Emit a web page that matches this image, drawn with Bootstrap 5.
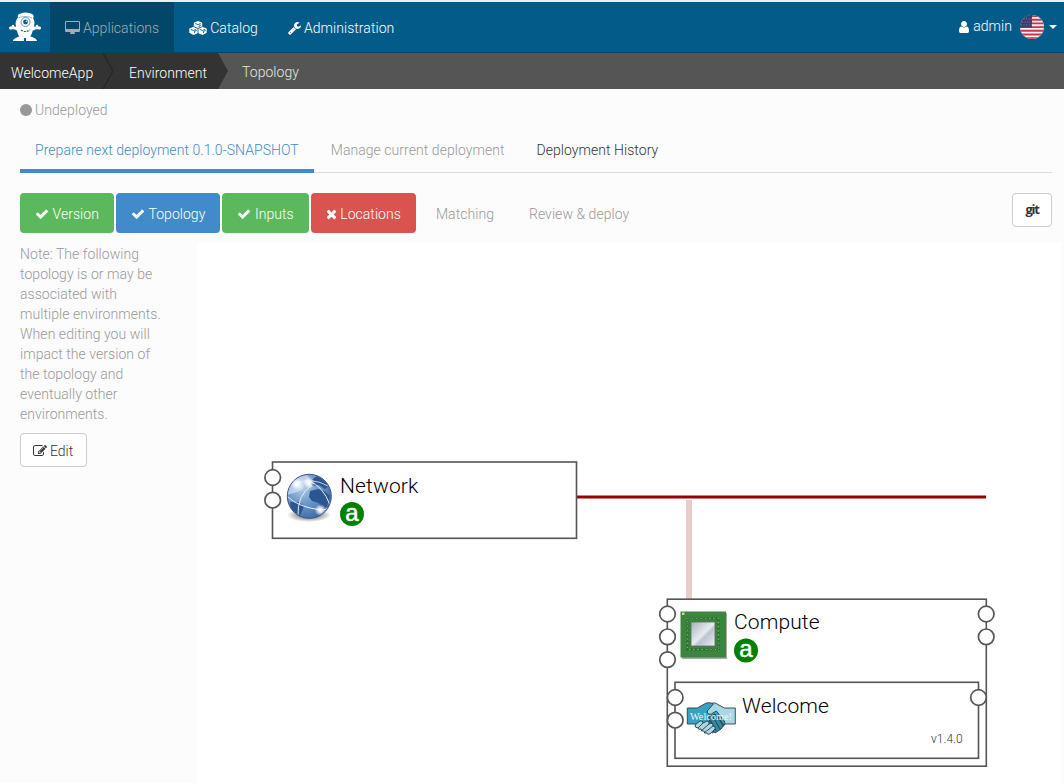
<!DOCTYPE html>
<html lang="en">
<head>
<meta charset="utf-8">
<meta name="viewport" content="width=device-width, initial-scale=1">
<title>WelcomeApp - Topology</title>
<link href="https://cdn.jsdelivr.net/npm/bootstrap@5.3.0/dist/css/bootstrap.min.css" rel="stylesheet">
<style>
body{font-family:Roboto,"Liberation Sans",sans-serif;font-weight:300;font-size:14px;line-height:20px;letter-spacing:.05px;color:#333;background:#fcfcfc;height:783px;overflow:hidden;border-top:2px solid #e9f0f4}
a{text-decoration:none}
.ico{fill:currentColor;height:14px;flex:none;display:block}
.topbar{background:#035b8a;height:51px;border-bottom:1px solid #02466b;--bs-navbar-padding-y:0}
.brand-box{width:50px}
.topbar .navbar-nav .nav-link{color:#fff;padding:2px 15px 0;gap:3px;height:50px;font-weight:300}
.topbar .navbar-nav .nav-link.active{background:#02466a;color:#a5abb0}
.user-menu{color:#fff;padding-right:7px}
.user-menu span{padding-bottom:2px}
.crumbs{background:#555;height:36px}
.crumbs svg{display:block;flex:none}
.crumb{background:#333;color:#fff;padding-top:4px}
.crumb-1{width:103px;padding-left:11px}
.crumb-2{width:105px;padding-left:16px}
.crumb-3{color:#e6e6e6;padding:2px 0 0 14px}
.state{color:#999;padding:11px 0 0 20px;gap:3px}
.dot{width:12px;height:12px;border-radius:50%;background:#999}
.tabs{margin:10px 12px 0 20px;height:43px;border-bottom:1px solid #ddd}
.tabs .nav-link{padding:10px 15px 0;height:43px;color:#999;border-bottom:4px solid transparent;margin-right:2px}
.tabs .nav-link.active{color:#428bca;border-color:#428bca}
.tabs .nav-link.dark{color:#333}
.steps{margin:20px 12px 0 20px;gap:2px;height:50px}
.step{height:40px;border-radius:4px;padding:2px 15px 0;gap:3.500px;color:#999}
.ok{background:#5cb85c;color:#fff}.cur{background:#428bca;color:#fff}.bad{background:#d9534f;color:#fff}
.plain-btn{background:#fff;border:1px solid #ccc;border-radius:4px;height:34px;font-size:14px;font-weight:300;color:#333;padding:2px 12px 0;line-height:20px}
.edit-btn{margin-top:9px;width:67px}
.git-btn{width:40px;padding:0 0 2px;font:700 13px "Open Sans","Noto Sans",sans-serif;letter-spacing:-1.300px}
.side{width:197px;padding:1px 30px 0 20px;color:#999}
.canvas{width:865px;height:540px;background:#fff}
.canvas svg{display:block}
.box{fill:#fff;stroke:#555;stroke-width:1.6}
.port{fill:#fff;stroke:#555;stroke-width:1.7}
.title{font-size:21px;fill:#000;letter-spacing:.13px}
.tag{font:400 24px "Liberation Sans",sans-serif;fill:#fff;stroke:#fff;stroke-width:.5;text-anchor:middle}
</style>
</head>
<body>
<svg class="d-none">
<symbol id="check" viewBox="0 0 1792 1792"><path d="M1671 566q0 40-28 68l-724 724-136 136q-28 28-68 28t-68-28l-136-136-362-362q-28-28-28-68t28-68l136-136q28-28 68-28t68 28l294 295 656-657q28-28 68-28t68 28l136 136q28 28 28 68z"/></symbol>
<symbol id="times" viewBox="192 0 1408 1792"><path d="M1490 1322q0 40-28 68l-136 136q-28 28-68 28t-68-28l-294-294-294 294q-28 28-68 28t-68-28l-136-136q-28-28-28-68t28-68l294-294-294-294q-28-28-28-68t28-68l136-136q28-28 68-28t68 28l294 294 294-294q28-28 68-28t68 28l136 136q28 28 28 68t-28 68l-294 294 294 294q28 28 28 68z"/></symbol>
</svg>

<nav class="topbar navbar navbar-expand flex-nowrap">
  <a class="brand-box d-flex justify-content-center" href="#">
    <svg width="34" height="30" viewBox="0 0 34 30"><g fill="#fff"><path d="M10 5.500C9 3 11 1.500 13 1.500c3-2 9-1 11 .5 2 1 2 3 1 4 2 3 2 7 0 11-.5 4-2 7-4 9h-8c-3-2-4-6-4-9-2-4-2-8 1-11.500z"/><path d="M9 17C7 15 5 15.500 2.500 16M25 17c2-2 4-1.500 6.500-1" stroke="#fff" stroke-width="3" fill="none" stroke-linecap="round"/><circle cx="5" cy="14" r="1.200"/><circle cx="29" cy="14" r="1.200"/><path d="M11 24.500h5V29H5c0-2 3-3 6-4.500zM18 24.500h5c3 1.500 6 2.500 6 4.500H18z"/></g><path d="M10.500 6c4-2 9-2 13.500 0" fill="none" stroke="#789fb5" stroke-width=".8"/><circle cx="17.500" cy="10" r="4.500" fill="#fff" stroke="#5f93b0"/><circle cx="17.500" cy="10" r="2.400" fill="#035b8a"/><circle cx="18.300" cy="9.200" r=".7" fill="#fff"/><path d="M13 18q4.500 3 9 0" fill="none" stroke="#035b8a" stroke-width="1.200" stroke-dasharray="2 1"/></svg>
  </a>
  <div class="navbar-nav">
    <a class="nav-link active d-flex align-items-center" href="#"><svg class="ico" width="15" viewBox="-64 0 1920 1792"><path d="M1728 992v-832q0-13-9.500-22.500t-22.500-9.500h-1600q-13 0-22.500 9.500t-9.500 22.500v832q0 13 9.500 22.500t22.500 9.500h1600q13 0 22.500-9.500t9.500-22.500zm128-832v1088q0 66-47 113t-113 47h-544q0 37 16 77.500t32 71 16 43.500q0 26-19 45t-45 19h-512q-26 0-45-19t-19-45q0-14 16-44t32-70 16-78h-544q-66 0-113-47t-47-113v-1088q0-66 47-113t113-47h1600q66 0 113 47t47 113z"/></svg>Applications</a>
    <a class="nav-link d-flex align-items-center" href="#"><svg class="ico" width="18" viewBox="0 0 18 14"><path d="M9 0l4.200 1.700v4L17.700 7.500v4.300L13.500 14 9 12 4.500 14 .3 11.800V7.500L4.800 5.700v-4z"/><path d="M6.300 2.500 9 3.600l2.700-1.100M10.200 6.400V4.900l2-.9M1.800 8.400l2.700 1.100 2.700-1.100M10.800 8.400l2.700 1.100 2.700-1.100M5.500 12v-1.600l2.200-1M14.500 12v-1.600l2.200-1M4.800 5.700 9 7.500l4.200-1.800M9 7.500V12" fill="none" stroke="#035b8a" stroke-width=".9"/></svg>Catalog</a>
    <a class="nav-link d-flex align-items-center" href="#"><svg class="ico" width="13" viewBox="64 0 1664 1792"><path d="M448 1472q0-26-19-45t-45-19-45 19-19 45 19 45 45 19 45-19 19-45zm644-420l-682 682q-37 37-90 37-52 0-91-37l-106-108q-38-36-38-90 0-53 38-91l681-681q39 98 114.500 173.500t173.500 114.500zm634-435q0 39-23 106-47 134-164.500 217.500t-258.500 83.500q-185 0-316.500-131.500t-131.500-316.500 131.500-316.500 316.500-131.500q58 0 121.500 16.500t107.500 46.500q16 11 16 28t-16 28l-293 169v224l193 107q5-3 79-48.500t135.500-81 70.500-35.500q15 0 23.500 10t8.500 25z"/></svg>Administration</a>
  </div>
  <a class="user-menu d-flex align-items-center ms-auto" href="#">
    <svg class="ico" width="10" viewBox="256 0 1280 1792"><path d="M1536 1399q0 109-62.500 187t-150.500 78h-854q-88 0-150.500-78t-62.500-187q0-85 8.500-160.500t31.500-152 58.500-131 94-89 134.500-34.500q131 128 313 128t313-128q76 0 134.500 34.500t94 89 58.500 131 31.500 152 8.500 160.500zm-256-887q0 159-112.500 271.500t-271.500 112.500-271.500-112.500-112.500-271.500 112.500-271.500 271.500-112.500 271.500 112.500 112.500 271.500z"/></svg>
    <span class="ms-1 me-2">admin</span>
    <svg width="24" height="24" viewBox="0 0 24 24"><clipPath id="flag"><circle cx="12" cy="12" r="12"/></clipPath><g clip-path="url(#flag)"><path fill="#f5f0f2" d="M0 0h24v24H0z"/><path d="M0 1h24M0 4.700h24M0 8.400h24M0 12.100h24M0 15.800h24M0 19.500h24M0 23.200h24" stroke="#c8374b" stroke-width="1.900"/><path fill="#3b3c70" d="M0 0h12v12.500H0z"/><path d="M1 4h11M2 7h10M1 10h11" stroke="#8c8cac" stroke-width=".8" stroke-dasharray="1 1.500"/></g></svg>
    <svg class="ms-1" width="9" height="5" viewBox="0 0 9 5"><path fill="#fff" d="M1 0h8L5 4z"/></svg>
  </a>
</nav>

<div class="crumbs d-flex align-items-stretch">
  <div class="crumb crumb-1 d-flex align-items-center">WelcomeApp</div>
  <svg width="10" height="36"><path fill="#333" d="M0 0h10v36H0z"/><path d="M0 0l10 18L0 36" fill="none" stroke="#222"/></svg>
  <div class="crumb crumb-2 d-flex align-items-center">Environment</div>
  <svg width="10" height="36"><path fill="#333" d="M0 0l10 18L0 36z"/></svg>
  <div class="crumb-3 d-flex align-items-center">Topology</div>
</div>

<div class="state d-flex align-items-center"><span class="dot"></span>Undeployed</div>

<div class="tabs nav">
  <a class="nav-link active" href="#">Prepare next deployment 0.1.0-SNAPSHOT</a>
  <a class="nav-link" href="#">Manage current deployment</a>
  <a class="nav-link dark" href="#">Deployment History</a>
</div>

<div class="steps d-flex align-items-start">
  <div class="step ok d-flex align-items-center"><svg class="ico" width="14"><use href="#check"/></svg>Version</div>
  <div class="step cur d-flex align-items-center"><svg class="ico" width="14"><use href="#check"/></svg>Topology</div>
  <div class="step ok d-flex align-items-center"><svg class="ico" width="14"><use href="#check"/></svg>Inputs</div>
  <div class="step bad d-flex align-items-center"><svg class="ico" width="11"><use href="#times"/></svg>Locations</div>
  <div class="step d-flex align-items-center" style="margin-left:3px">Matching</div>
  <div class="step d-flex align-items-center" style="margin-left:3px">Review &amp; deploy</div>
  <button class="plain-btn git-btn ms-auto">git</button>
</div>

<div class="d-flex align-items-start">
  <div class="side flex-shrink-0">
    <div>Note: The following topology is or may be associated with multiple environments. When editing you will impact the version of the topology and eventually other environments.</div>
    <button class="plain-btn edit-btn d-flex align-items-center"><svg class="ico" width="14" viewBox="0 0 1792 1792"><path d="M888 1184l116-116-152-152-116 116v56h96v96h56zm440-720q-16-16-33 1l-350 350q-17 17-1 33t33-1l350-350q17-17 1-33zm80 594v190q0 119-84.500 203.500t-203.500 84.500h-832q-119 0-203.500-84.500t-84.500-203.500v-832q0-119 84.500-203.500t203.500-84.500h832q63 0 117 25 15 7 18 23 3 17-9 29l-49 49q-14 14-32 8-23-6-45-6h-832q-66 0-113 47t-47 113v832q0 66 47 113t113 47h832q66 0 113-47t47-113v-126q0-13 9-22l64-64q15-15 35-7t20 29zm-96-738l288 288-672 672h-288v-288zm444 132l-92 92-288-288 92-92q28-28 68-28t68 28l152 152q28 28 28 68t-28 68z"/></svg><span style="margin-left:3px">Edit</span></button>
  </div>
  <div class="canvas flex-shrink-0">
    <svg width="865" height="540" viewBox="197 243 865 540">
      <defs>
        <radialGradient id="sea" cx=".35" cy=".3" r=".8"><stop offset="0" stop-color="#b5cfea"/><stop offset=".45" stop-color="#6c98ca"/><stop offset="1" stop-color="#3a65a0"/></radialGradient>
        <radialGradient id="glow"><stop offset="0" stop-color="#fff"/><stop offset=".35" stop-color="#fff" stop-opacity=".85"/><stop offset="1" stop-color="#fff" stop-opacity="0"/></radialGradient>
        <radialGradient id="shade"><stop offset=".5" stop-color="#777" stop-opacity=".7"/><stop offset="1" stop-color="#777" stop-opacity="0"/></radialGradient>
        <linearGradient id="die" x1="0" y1="0" x2="1" y2="1"><stop offset="0" stop-color="#a5afb9"/><stop offset=".5" stop-color="#e8ebef"/><stop offset=".6" stop-color="#bcc4d0"/><stop offset="1" stop-color="#eef0f3"/></linearGradient>
        <clipPath id="ball"><circle cx="309.300" cy="496.300" r="21.500"/></clipPath>
      </defs>
      <path d="M577 497h409" stroke="#990000" stroke-width="3"/>
      <path d="M689 500v99" stroke="#990000" stroke-opacity=".2" stroke-width="6"/>

      <!-- Network node -->
      <rect class="box" x="272.500" y="462" width="304" height="76.300"/>
      <circle class="port" cx="272.700" cy="477.500" r="7.800"/><circle class="port" cx="272.700" cy="500.200" r="7.800"/>
      <ellipse cx="309" cy="515" rx="22" ry="7" fill="url(#shade)"/>
      <circle cx="309.300" cy="496.300" r="22" fill="url(#sea)" stroke="#46508a"/>
      <g clip-path="url(#ball)">
        <path fill="#2d558f" d="M310 481l7-5 8 3 4 7-4 3-6-4-8 1zM310 491l8-2 6 2 6 5-3 10-5 6-3-9-7-2-3-4zM290 502l8 0 6 4-2 5-3 6-8-6z"/>
        <path fill="#e5effa" fill-opacity=".55" d="M289 487q6-11 18-12l3 4-5 5-3 6-8 3-7 2z"/>
        <path d="M288 497q10 10 33 13 9 0 11-8M309 481q14 5 21 24M298 516q-1-21 14-31" fill="none" stroke="#e3eefb" stroke-width="1"/>
        <path d="M296 483q16-6 32 3" fill="none" stroke="#e3eefb" stroke-width=".8"/>
        <circle cx="297" cy="484" r="6" fill="url(#glow)"/><circle cx="309" cy="483" r="6" fill="url(#glow)"/><circle cx="320.500" cy="510" r="6" fill="url(#glow)"/>
      </g>
      <text class="title" x="340" y="493">Network</text>
      <circle cx="352" cy="514" r="12" fill="#008000"/><text class="tag" x="352" y="520.500">a</text>

      <!-- Compute node -->
      <rect class="box" x="667.300" y="599.200" width="319" height="167"/>
      <circle class="port" cx="667.500" cy="614" r="7.800"/><circle class="port" cx="667.500" cy="636.800" r="7.800"/><circle class="port" cx="667.500" cy="659.600" r="7.800"/>
      <circle class="port" cx="986.200" cy="614" r="7.800"/><circle class="port" cx="986.200" cy="636.800" r="7.800"/>
      <path fill="#aaa" d="M682 613h45v46h-45z"/><path fill="#3c8440" d="M680.500 611.500H726V657.500H680.500z"/><path fill="#d9d59a" d="M682 612.500h2.500v2.500H682z"/>
      <path fill="none" stroke="#2d6c31" stroke-width="2.500" stroke-dasharray="2 2" d="M687.500 618.500h31v31h-31z"/><path fill="none" stroke="#8db56d" stroke-width="1" stroke-dasharray="1 3.300" d="M687.500 618.500h31v31h-31z"/>
      <path fill="url(#die)" stroke="#596b60" stroke-width=".8" d="M691 622h24v24h-24z"/>
      <text class="title" x="734" y="629">Compute</text>
      <circle cx="746" cy="650.500" r="12" fill="#008000"/><text class="tag" x="746" y="657">a</text>

      <!-- Welcome node, hosted on Compute -->
      <rect class="box" x="675" y="682.300" width="303.500" height="76"/>
      <circle class="port" cx="675.200" cy="697.500" r="7.800"/><circle class="port" cx="675.200" cy="720.200" r="7.800"/><circle class="port" cx="978.500" cy="697.500" r="7.800"/>
      <g stroke="#303c40" stroke-width=".9" stroke-linejoin="round">
        <path fill="#a7d8e4" d="M735.300 708v16h-11l-8 5-11-20q5-7 10-6l9 5z"/>
        <path fill="#36a3c0" d="M687.300 708h10l9-5q5-1 7 1l-6 7q0 4 4 3l5-3 8 10q2 3-1 5l-11 7-16-9h-9z"/>
        <path fill="#2d8ba5" d="M709 717l6-3 9 11-3 4-3 2-3 2-4-4z"/>
        <path d="M713 717l7 12M710 719l6 12M717 715l6 11" fill="none"/>
        <path fill="#a7d8e4" d="M695 725l5-4q3-1 3 2l4-2q3 0 2 3 4-2 4 2 3 0 2 3l-5 5q-3 1-3-1-3 1-3-2-3 1-3-2-3 1-3-1-3 0-3-3z"/>
        <path d="M703 723l-5 5M709 724l-8 7M713 726l-9 7" fill="none"/>
      </g>
      <text x="690" y="719.500" textLength="42" lengthAdjust="spacingAndGlyphs" font-family="Liberation Serif, serif" font-size="11" fill="#eaf7fa">Welcome!</text>
      <text class="title" x="742" y="713">Welcome</text>
      <text x="931" y="743" font-size="12" fill="#333">v1.4.0</text>
    </svg>
  </div>
</div>
<script src="https://cdn.jsdelivr.net/npm/bootstrap@5.3.0/dist/js/bootstrap.bundle.min.js"></script>
</body>
</html>
